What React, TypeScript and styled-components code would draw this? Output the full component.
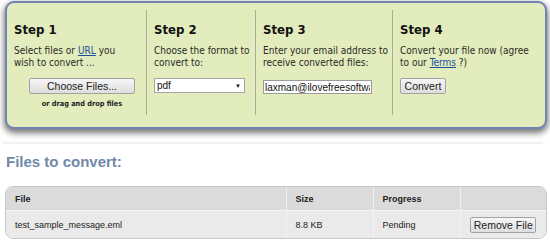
import React from "react";
import styled, { createGlobalStyle } from "styled-components";

const Global = createGlobalStyle`
  html, body { margin: 0; padding: 0; background: #ffffff; }
  body { font-family: "Liberation Sans", Arial, sans-serif; }
`;

const Page = styled.div`
  width: 550px;
  height: 241px;
  overflow: hidden;
`;

const Panel = styled.div`
  box-sizing: border-box;
  margin: 1px 0 0 5px;
  width: 542px;
  height: 128px;
  border: 2px solid #7184b4;
  border-radius: 9px;
  background: #e2ecbc;
  box-shadow: 0 3px 6px 1px rgba(0, 0, 0, 0.55);
  display: flex;
  padding-top: 7px;
`;

const Column = styled.div<{ $w: number; $pr: number; $first?: boolean }>`
  box-sizing: border-box;
  width: ${(p) => p.$w}px;
  height: 105px;
  padding: 12px ${(p) => p.$pr}px 0 7px;
  border-left: ${(p) => (p.$first ? "none" : "1px solid #a9ae9a")};
  font-family: "DejaVu Sans Condensed", "DejaVu Sans", Verdana, sans-serif;
  font-stretch: condensed;
  color: #2a2a2a;
`;

const StepTitle = styled.h2`
  margin: 0;
  font-size: 13px;
  line-height: 16px;
  font-weight: bold;
  color: #111;
`;

const Desc = styled.p`
  margin: 7px 0 0 0;
  font-size: 10px;
  line-height: 12px;
`;

const Link = styled.a`
  color: #1d4f9c;
  text-decoration: underline;
`;

const Controls = styled.div`
  margin-top: 9px;
  display: flex;
  flex-direction: column;
  align-items: flex-start;
`;

const UploadArea = styled.div`
  margin: 9px 0 0 15px;
  width: 106px;
  display: flex;
  flex-direction: column;
  align-items: center;
`;

const Button = styled.button<{ $w: number }>`
  box-sizing: border-box;
  width: ${(p) => p.$w}px;
  height: 16px;
  padding: 0;
  border: 1px solid #a2a2a2;
  border-radius: 2px;
  background: linear-gradient(#f6f6f6, #dedede);
  font-family: "Liberation Sans", Arial, sans-serif;
  font-size: 10.5px;
  line-height: 14px;
  color: #222;
  white-space: nowrap;
`;

const DropHint = styled.div`
  margin-top: 5px;
  font-size: 7.3px;
  line-height: 9px;
  font-weight: bold;
  color: #222;
`;

const Select = styled.div`
  box-sizing: border-box;
  width: 91px;
  height: 15px;
  background: #fff;
  border: 1px solid #a5a5a5;
  display: flex;
  align-items: center;
  justify-content: space-between;
  padding: 0 3px 0 2px;
  font-family: "Liberation Sans", Arial, sans-serif;
  font-size: 10px;
  color: #111;
`;

const Arrow = styled.span`
  font-size: 6px;
  color: #111;
`;

const EmailInput = styled.input`
  box-sizing: border-box;
  margin-top: 2px;
  width: 109px;
  height: 14px;
  padding: 0 1px;
  border: 1px solid #9a9a9a;
  background: #fff;
  font-family: "Liberation Sans", Arial, sans-serif;
  font-size: 10px;
  color: #111;
  outline: none;
`;

const Separator = styled.div`
  margin: 13px 0 0 3px;
  width: 540px;
  height: 2px;
  background: #f1f1f1;
`;

const SectionTitle = styled.h3`
  margin: 9px 0 0 6px;
  font-size: 15px;
  line-height: 18px;
  font-weight: bold;
  color: #7189a9;
`;

const TableWrap = styled.div`
  box-sizing: border-box;
  margin: 15px 0 0 5px;
  width: 542px;
  border: 1px solid #c6c6c6;
  border-radius: 8px;
  overflow: hidden;
`;

const Table = styled.table`
  width: 100%;
  border-collapse: collapse;
  table-layout: fixed;
  font-family: "Liberation Sans", Arial, sans-serif;
  font-size: 9px;
  color: #222;
`;

const Col = styled.col<{ $w?: number }>`
  ${(p) => (p.$w ? `width: ${p.$w}px;` : "")}
`;

const Th = styled.th`
  height: 23px;
  padding: 0 0 0 9px;
  text-align: left;
  font-weight: bold;
  background: #dbdbdb;
  border-left: 1px solid #efefef;
  border-bottom: 1px solid #f4f4f4;
  &:first-child { border-left: none; }
`;

const Td = styled.td<{ $center?: boolean }>`
  height: 27px;
  padding: 0 0 0 ${(p) => (p.$center ? 0 : 9)}px;
  text-align: ${(p) => (p.$center ? "center" : "left")};
  background: #eaeaea;
  border-left: 1px solid #f2f2f2;
  &:first-child { border-left: none; }
`;

export default function App() {
  return (
    <Page>
      <Global />
      <Panel>
        <Column $w={139} $pr={22} $first>
          <StepTitle>Step 1</StepTitle>
          <Desc>
            Select files or <Link href="#">URL</Link> you wish to convert ...
          </Desc>
          <UploadArea>
            <Button $w={106}>Choose Files...</Button>
            <DropHint>or drag and drop files</DropHint>
          </UploadArea>
        </Column>
        <Column $w={109} $pr={4}>
          <StepTitle>Step 2</StepTitle>
          <Desc>Choose the format to convert to:</Desc>
          <Controls>
            <Select>
              <span>pdf</span>
              <Arrow>▼</Arrow>
            </Select>
          </Controls>
        </Column>
        <Column $w={137} $pr={4}>
          <StepTitle>Step 3</StepTitle>
          <Desc>Enter your email address to receive converted files:</Desc>
          <Controls>
            <EmailInput defaultValue="laxman@ilovefreesoftware.com" />
          </Controls>
        </Column>
        <Column $w={153} $pr={8}>
          <StepTitle>Step 4</StepTitle>
          <Desc>
            Convert your file now (agree to our <Link href="#">Terms</Link> ?)
          </Desc>
          <Controls>
            <Button $w={46}>Convert</Button>
          </Controls>
        </Column>
      </Panel>
      <Separator />
      <SectionTitle>Files to convert:</SectionTitle>
      <TableWrap>
        <Table>
          <colgroup>
            <Col $w={280} />
            <Col $w={87} />
            <Col $w={87} />
            <Col />
          </colgroup>
          <thead>
            <tr>
              <Th>File</Th>
              <Th>Size</Th>
              <Th>Progress</Th>
              <Th></Th>
            </tr>
          </thead>
          <tbody>
            <tr>
              <Td>test_sample_message.eml</Td>
              <Td>8.8 KB</Td>
              <Td>Pending</Td>
              <Td $center>
                <Button $w={66}>Remove File</Button>
              </Td>
            </tr>
          </tbody>
        </Table>
      </TableWrap>
    </Page>
  );
}
